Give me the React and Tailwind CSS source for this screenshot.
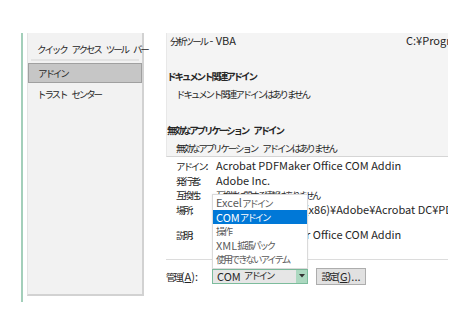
import React from 'react';

// Japanese runs: the reference font (Meiryo UI) is much narrower than Noto CJK
function J({ children, className = '' }) {
  const words = String(children).split(' ');
  return (
    <span className={`text-[9.5px] tracking-[-2.1px] ${className}`}>
      {words.map((w, i) => (
        <React.Fragment key={i}>
          {i > 0 && <span className="inline-block w-[5px]" />}
          {w}
        </React.Fragment>
      ))}
    </span>
  );
}

function DetailRow({ label, children }) {
  return (
    <div className="flex h-[14.5px] items-center whitespace-nowrap">
      <span className="w-[40px] shrink-0"><J>{label}</J>:</span>
      <span>{children}</span>
    </div>
  );
}

export default function App() {
  const options = [
    <>Excel <J>アドイン</J></>,
    <>COM <J>アドイン</J></>,
    <J>操作</J>,
    <>XML <J>拡張パック</J></>,
    <J>使用できないアイテム</J>,
  ];

  return (
    <div className="relative flex h-[336px] w-[471px] overflow-hidden bg-white pl-[21px] pt-[33px] font-['Noto_Sans_CJK_JP','Noto_Sans',sans-serif] text-[11px] text-[#262626]">
      {/* left nav */}
      <div className="h-[269px] w-[2px] bg-[#a3cfba]" />
      <div className="ml-[4px] flex h-[263px] w-[117px] flex-col border-b-2 border-r-2 border-l border-b-[#d2d2d2] border-r-[#d2d2d2] border-l-[#e4e4e4] bg-[#f2f2f2]">
        <div className="flex h-[23px] items-end whitespace-nowrap pl-[9px]"><J>クイック アクセス ツール バー</J></div>
        <div className="mx-[3px] mt-[3px] h-[2px] bg-[#e3e3e3]" />
        <div className="mt-[2px] flex h-[20px] items-center border border-[#a0a0a0] bg-[#c6c6c6] pl-[9px]"><J>アドイン</J></div>
        <div className="flex h-[22px] items-center pl-[9px]"><J>トラスト センター</J></div>
      </div>

      {/* right side */}
      <div className="ml-[22px] flex w-[282px] flex-col">
        <div className="h-[124px] overflow-hidden border-b border-l border-b-[#d5d5d5] border-l-[#e8e8e8] bg-[#f4f4f4]">
          <div className="-mt-[2px]">
            <div className="flex h-[18px] items-center whitespace-nowrap pl-[3px]">
              <span className="w-[236px] shrink-0"><J>分析ツール</J> - VBA</span>
              <span>C:¥Program Files</span>
            </div>
            <div className="h-[18px]" />
            <div className="flex h-[18px] items-center font-bold"><J>ドキュメント関連アドイン</J></div>
            <div className="flex h-[18px] items-center pl-[9px]"><J>ドキュメント関連アドインはありません</J></div>
            <div className="h-[18px]" />
            <div className="flex h-[18px] items-center font-bold"><J>無効なアプリケーション アドイン</J></div>
            <div className="flex h-[18px] items-center pl-[9px]"><J>無効なアプリケーション アドインはありません</J></div>
          </div>
        </div>

        <div className="relative overflow-hidden pl-[10px] pt-[1px]">
          <DetailRow label="アドイン">Acrobat PDFMaker Office COM Addin</DetailRow>
          <DetailRow label="発行者">Adobe Inc.</DetailRow>
          <DetailRow label="互換性"><J className="text-[9px]">互換性に関する情報はありません</J></DetailRow>
          <DetailRow label="場所">C:¥Program Files (x86)¥Adobe¥Acrobat DC¥PDFMaker¥Office¥PDFMOfficeAddin.dll</DetailRow>
          <div className="h-[11px]" />
          <DetailRow label="説明">Acrobat PDFMaker Office COM Addin</DetailRow>
        </div>

        <div className="mt-[17px] h-px bg-[#dcdcdc]" />

        <div className="mt-[8px] flex items-center">
          <span className="w-[46px] whitespace-nowrap"><J>管理</J>(<span className="underline">A</span>):</span>
          <div className="relative flex h-[15px] w-[96px] border border-[#7cbc9c] bg-[#e6e6e6]">
            <span className="flex flex-1 items-center whitespace-nowrap pl-[4px] leading-none">COM <J className="ml-[3px]">アドイン</J></span>
            <span className="flex w-[11px] items-center justify-center bg-[#acd8c0]">
              <svg width="6" height="4" viewBox="0 0 6 4"><path d="M0 0h6L3 3.5z" fill="#333" /></svg>
            </span>
            {/* open dropdown */}
            <div className="absolute bottom-[14px] -left-px w-[96px] border border-[#dadada] bg-white py-px text-[#5a5a5a] shadow-[0_0_2px_rgba(0,0,0,0.08)]">
              {options.map((o, i) => (
                <div
                  key={i}
                  className={`flex h-[14.2px] items-center whitespace-nowrap pl-[3px] ${i === 1 ? 'bg-[#0078d7] text-white' : ''}`}
                >
                  {o}
                </div>
              ))}
            </div>
          </div>
          <button className="ml-[8px] flex h-[17px] w-[50px] items-center justify-center whitespace-nowrap border border-[#adadad] bg-[#e1e1e1] text-[11px] text-[#262626]">
            <J>設定</J>(<span className="underline">G</span>)...
          </button>
        </div>
      </div>
    </div>
  );
}
